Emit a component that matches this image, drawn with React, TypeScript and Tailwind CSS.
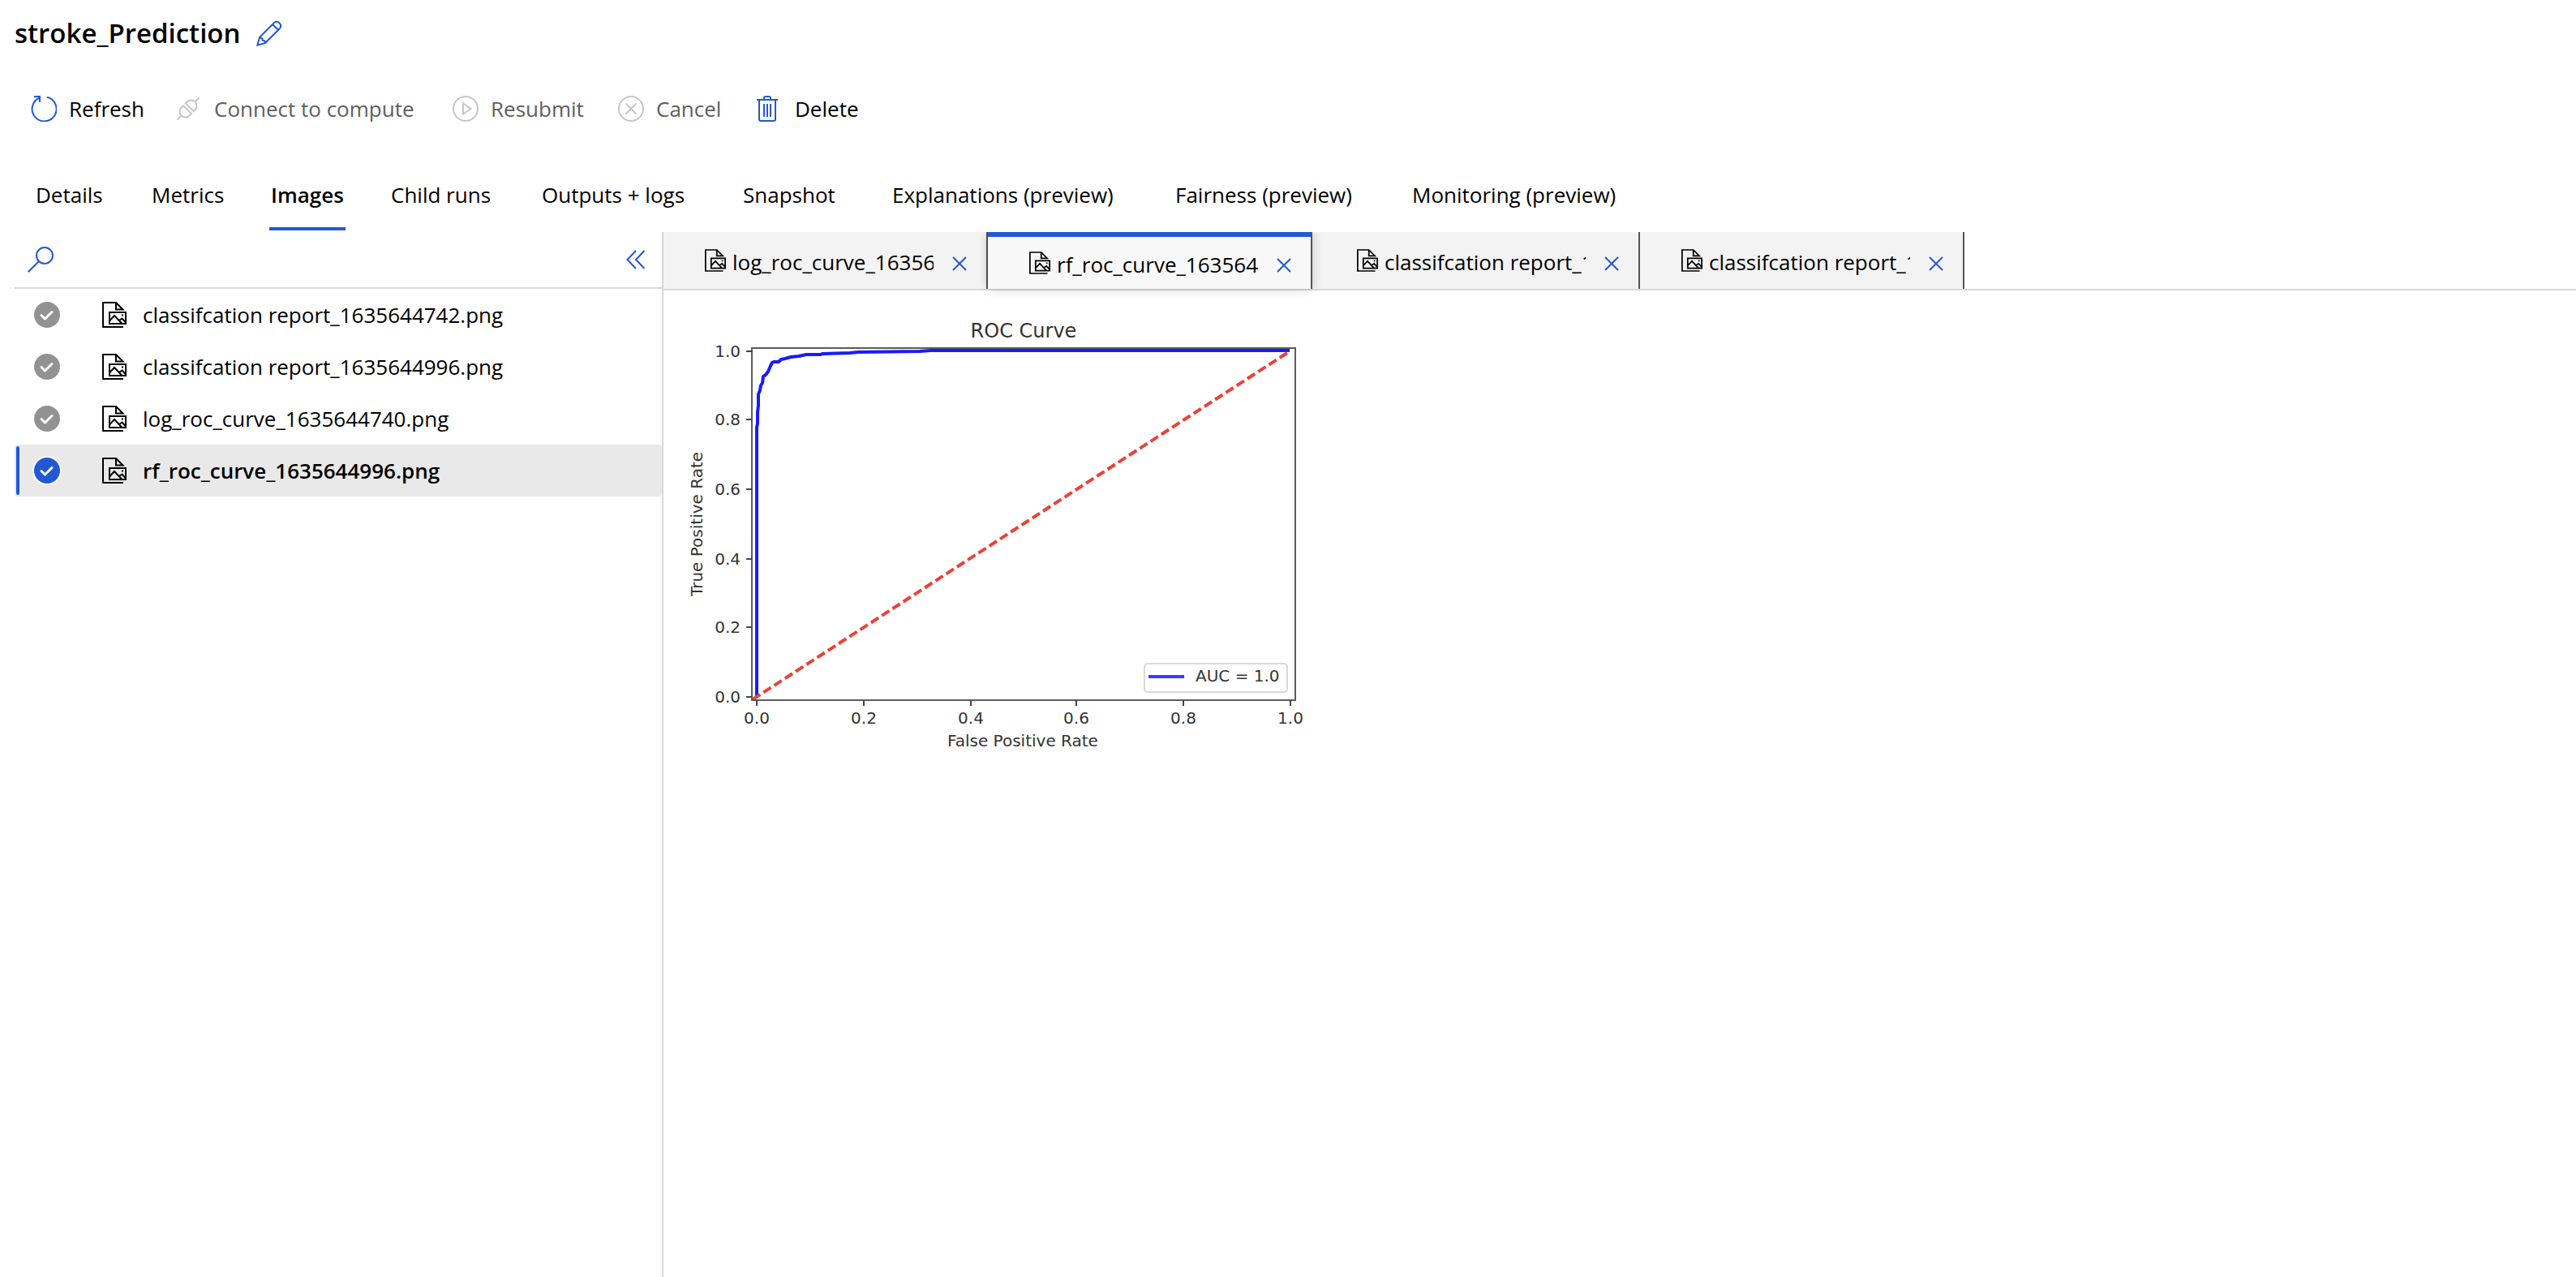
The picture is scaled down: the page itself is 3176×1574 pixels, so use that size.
import { useState, type ReactNode } from "react";

const BLUE = "#2259d3";

type IconProps = { className?: string };

function PencilIcon() {
  return (
    <svg width="32" height="32" viewBox="0 0 32 32" fill="none" stroke={BLUE} strokeWidth="2" aria-hidden="true">
      <path d="M1.400 30.600 4 21 22 3A5 5 0 0 1 29 10L11 28Z" />
      <path d="M20 5l7 7M4 21.500c2.500 0 3.800 1 3.800 3.200 2.200 0 3.400 1.200 3.400 3.300" />
    </svg>
  );
}

function RefreshIcon() {
  return (
    <svg width="32" height="32" viewBox="0 0 32 32" fill="none" stroke={BLUE} strokeWidth="2" aria-hidden="true">
      <path d="M20 1.800A15 15 0 1 1 11 2.500M4 1h7v7" />
    </svg>
  );
}

function PlugIcon() {
  return (
    <svg width="30" height="30" viewBox="0 0 30 30" fill="none" stroke="#c8c6c4" strokeWidth="2" aria-hidden="true">
      <g transform="translate(15 15) rotate(-45)">
        <path d="M-1.500-7V7H-5A7 7 0 0 1-5-7ZM2.500-7V7H5A7 7 0 0 0 5-7ZM-12 0H-19M12 0H19" />
      </g>
    </svg>
  );
}

function PlayIcon() {
  return (
    <svg width="32" height="32" viewBox="0 0 32 32" fill="none" stroke="#c8c6c4" strokeWidth="2" aria-hidden="true">
      <circle cx="16" cy="16" r="15" />
      <path d="M13 9.500v13L22.500 16Z" />
    </svg>
  );
}

function CancelIcon() {
  return (
    <svg width="32" height="32" viewBox="0 0 32 32" fill="none" stroke="#c8c6c4" strokeWidth="2" aria-hidden="true">
      <circle cx="16" cy="16" r="15" />
      <path d="M9.500 9.500l13 13M22.500 9.500l-13 13" />
    </svg>
  );
}

function TrashIcon() {
  return (
    <svg width="26" height="32" viewBox="0 0 26 32" fill="none" stroke={BLUE} strokeWidth="2" aria-hidden="true">
      <path d="M0 5h26M9 5V3a2 2 0 0 1 2-2h4a2 2 0 0 1 2 2v2M3 5v24a2 2 0 0 0 2 2h16a2 2 0 0 0 2-2V5M9 10v16M13 10v16M17 10v16" />
    </svg>
  );
}

function SearchIcon() {
  return (
    <svg width="32" height="32" viewBox="0 0 32 32" fill="none" stroke={BLUE} strokeWidth="2" aria-hidden="true">
      <circle cx="21" cy="11" r="10" />
      <path d="M14 18 .7 31.300" />
    </svg>
  );
}

function CollapseIcon() {
  return (
    <svg width="24" height="24" viewBox="0 0 24 24" fill="none" stroke={BLUE} strokeWidth="2" aria-hidden="true">
      <path d="M12 1 1.500 12 12 23M22.500 1 12 12l10.500 11" />
    </svg>
  );
}

function CloseIcon() {
  return (
    <svg width="18" height="18" viewBox="0 0 18 18" fill="none" stroke={BLUE} strokeWidth="2" aria-hidden="true">
      <path d="M1 1l16 16M17 1 1 17" />
    </svg>
  );
}

function ImageFileIcon({ className }: IconProps) {
  return (
    <svg className={className} viewBox="0 0 30 32" fill="none" stroke="currentColor" strokeWidth="2" aria-hidden="true">
      <path d="M26 31H1V1h16l8.500 8.500H17V1" />
      <path d="M9 13h20v14H9ZM9 23.500l6-6.500 9.500 10M21 23l3.500-2.500L29 25.500" />
      <path d="M24 16.500h2" />
    </svg>
  );
}

const commands: { label: string; icon: ReactNode; disabled?: boolean; width: string }[] = [
  { label: "Refresh", icon: <RefreshIcon />, width: "w-[179px]" },
  { label: "Connect to compute", icon: <PlugIcon />, disabled: true, width: "w-[341px]" },
  { label: "Resubmit", icon: <PlayIcon />, disabled: true, width: "w-[204px]" },
  { label: "Cancel", icon: <CancelIcon />, disabled: true, width: "w-[171px]" },
  { label: "Delete", icon: <TrashIcon />, width: "w-[140px]" },
];

const sections = [
  { label: "Details", width: "w-[143px]" },
  { label: "Metrics", width: "w-[147px]" },
  { label: "Images", width: "w-[148px]" },
  { label: "Child runs", width: "w-[186px]" },
  { label: "Outputs + logs", width: "w-[248px]" },
  { label: "Snapshot", width: "w-[184px]" },
  { label: "Explanations (preview)", width: "w-[349px]" },
  { label: "Fairness (preview)", width: "w-[292px]" },
  { label: "Monitoring (preview)", width: "w-[292px]" },
];

const files = [
  "classifcation report_1635644742.png",
  "classifcation report_1635644996.png",
  "log_roc_curve_1635644740.png",
  "rf_roc_curve_1635644996.png",
];

const openTabs = [files[2], files[3], files[1], files[0]];

const CURVE: [number, number][] = [
  [933, 859], [933, 527], [934, 522], [934, 508], [935, 500], [935, 486], [937, 481], [938, 475],
  [940, 472], [941, 464], [944, 462], [947, 458], [950, 451], [952, 447], [954, 446], [960, 446],
  [963, 443], [968, 442], [975, 440], [985, 439], [994, 437], [1012, 437], [1014, 436], [1048, 435],
  [1058, 434], [1134, 433], [1147, 432], [1590, 432],
];

function RocChart() {
  const xs = [933, 1065, 1197, 1327, 1459, 1591];
  const ys = [859, 773, 689, 603, 517, 433];
  const labels = ["0.0", "0.2", "0.4", "0.6", "0.8", "1.0"];
  return (
    <svg
      className="block h-auto w-[800px] font-['DejaVu_Sans',sans-serif]"
      viewBox="818 358 800 580"
      fill="#333"
      fontSize="20"
      role="img"
      aria-label="ROC Curve"
    >
      <text x="1262" y="416" fontSize="24" textAnchor="middle">ROC Curve</text>
      <path d={"M" + CURVE.map((p) => p.join(" ")).join("L")} fill="none" stroke="#1a1aff" strokeWidth="4" strokeLinejoin="round" />
      <path d="M928 862 1590 433" stroke="#ea4238" strokeWidth="4" strokeDasharray="11 4.800" />
      <rect x="927" y="429" width="670" height="434" fill="none" stroke="#5c5c5c" strokeWidth="2" />
      {labels.map((label, i) => (
        <g key={label}>
          <path d={`M${xs[i]} 863v7M927 ${ys[i]}h-7`} stroke="#444" strokeWidth="2" />
          <text x={xs[i]} y="892" textAnchor="middle">{label}</text>
          <text x="913" y={ys[i] + 7} textAnchor="end">{label}</text>
        </g>
      ))}
      <text x="1261" y="920" textAnchor="middle">False Positive Rate</text>
      <text transform="translate(866 646) rotate(-90)" textAnchor="middle">True Positive Rate</text>
      <rect x="1411" y="818" width="176" height="35" rx="4" fill="#fff" stroke="#d9d9d9" strokeWidth="2" />
      <path d="M1416 834h44" stroke="#3a3aff" strokeWidth="4" />
      <text x="1474" y="840">AUC = 1.0</text>
    </svg>
  );
}

export default function App() {
  const [section, setSection] = useState("Images");
  const [selected, setSelected] = useState(files[3]);

  return (
    <div className="flex min-h-screen flex-col bg-white font-['Open_Sans','Noto_Sans',sans-serif] text-[26px] leading-9 text-black">
      <header className="flex h-[82px] items-center gap-5 pl-[18px]">
        <h1 className="text-[33px] font-semibold">stroke_Prediction</h1>
        <button type="button" aria-label="Edit name"><PencilIcon /></button>
      </header>

      <div className="flex h-[104px] items-center pl-[38px]" role="toolbar" aria-label="Run actions">
        {commands.map((c) => (
          <button
            key={c.label}
            type="button"
            disabled={c.disabled}
            className={`flex shrink-0 items-center gap-[15px] whitespace-nowrap disabled:text-[#605e5c] ${c.width}`}
          >
            <span className="flex w-8 shrink-0 items-center">{c.icon}</span>
            {c.label}
          </button>
        ))}
      </div>

      <nav className="mb-0.5 flex h-[98px] pl-[42px] pt-2.5" role="tablist" aria-label="Run sections">
        {sections.map((s) => (
          <div key={s.label} className={`flex shrink-0 items-stretch ${s.width}`}>
            <button
              type="button"
              role="tab"
              aria-selected={section === s.label}
              onClick={() => setSection(s.label)}
              className="whitespace-nowrap border-y-4 border-transparent px-0.5 aria-selected:border-b-[#2259d3] aria-selected:font-semibold"
            >
              {s.label}
            </button>
          </div>
        ))}
      </nav>

      <div className="flex flex-1">
        <aside className="w-[818px] shrink-0 border-r-2 border-[#d8d8d8] pl-[18px]">
          <div className="flex h-[70px] items-center border-b-2 border-[#d8d8d8] pl-4 pr-5">
            <label htmlFor="file-search" className="shrink-0"><SearchIcon /></label>
            <input id="file-search" type="text" aria-label="Search files" className="h-full min-w-0 flex-1 px-4 outline-none" />
            <button type="button" aria-label="Collapse panel"><CollapseIcon /></button>
          </div>
          <ul>
            {files.map((name) => {
              const active = name === selected;
              return (
                <li key={name} className={`flex h-16 items-center rounded ${active ? "bg-[#e9e9e9]" : ""}`}>
                  <span className={`ml-0.5 h-[60px] w-1 rounded-xs ${active ? "bg-[#2259d3]" : ""}`} />
                  <span className="relative ml-[18px] flex">
                    <input
                      type="checkbox"
                      defaultChecked
                      aria-label={name}
                      className={`size-8 appearance-none rounded-full ${active ? "bg-[#2259d3] ring-2 ring-white" : "bg-[#929292]"}`}
                    />
                    <svg className="pointer-events-none absolute inset-0" width="32" height="32" viewBox="0 0 32 32" fill="none" stroke="#fff" strokeWidth="3" strokeLinecap="round" strokeLinejoin="round" aria-hidden="true">
                      <path d="M9 16.500l4.500 4.500L22 12.500" />
                    </svg>
                  </span>
                  <button
                    type="button"
                    onClick={() => setSelected(name)}
                    className={`ml-[52px] flex items-center gap-5 whitespace-nowrap ${active ? "font-semibold" : ""}`}
                  >
                    <ImageFileIcon className="h-8 w-[30px]" />
                    {name}
                  </button>
                </li>
              );
            })}
          </ul>
        </aside>

        <main className="min-w-0 flex-1">
          <div className="flex h-[72px] border-b-2 border-[#d8d8d8]">
            <div className="flex bg-[#f3f3f3]" role="tablist" aria-label="Open files">
              {openTabs.map((name) => {
                const active = name === files[3];
                return (
                  <div
                    key={name}
                    className={`flex w-[400px] items-center border-r-2 border-[#555] pl-[51px] pt-1 ${
                      active ? "relative mr-1 bg-[#f8f8f8] shadow-[0_0_12px_rgba(0,0,0,0.2)] [clip-path:inset(0_-14px_-14px_-14px)]" : ""
                    }`}
                  >
                    {active && <span className="absolute inset-x-0 top-0 h-1.5 bg-[#2259d3]" />}
                    <button type="button" role="tab" aria-selected={active} className={`flex items-center gap-2 ${active ? "pt-1.5" : ""}`}>
                      <ImageFileIcon className="mb-1 h-7 w-[26px] shrink-0" />
                      <span className="w-[248px] overflow-hidden whitespace-nowrap text-left">{name}</span>
                    </button>
                    <button type="button" aria-label={`Close ${name}`} className={`ml-[23px] ${active ? "pt-2" : "pt-1"}`}>
                      <CloseIcon />
                    </button>
                  </div>
                );
              })}
            </div>
          </div>
          <RocChart />
        </main>
      </div>
    </div>
  );
}
